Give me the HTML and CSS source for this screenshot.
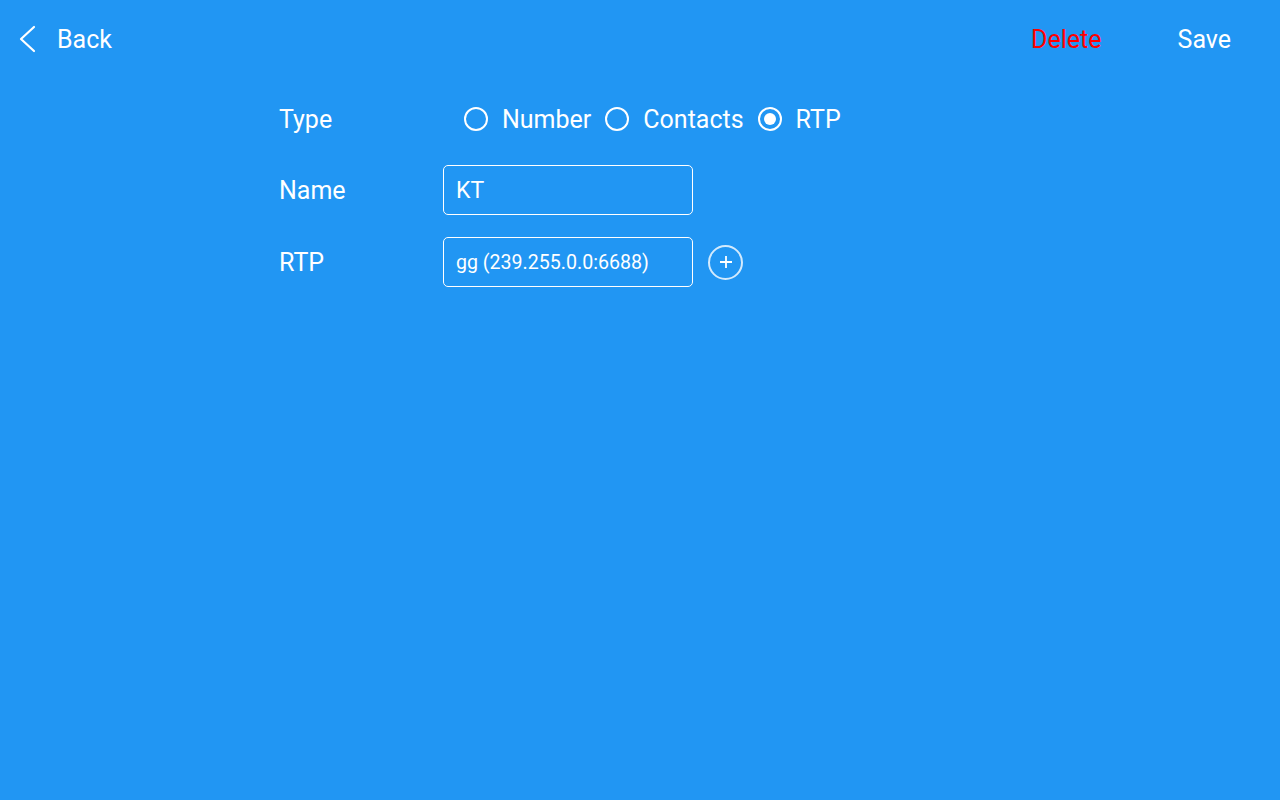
FILE: index.html
```html
<!DOCTYPE html>
<html>
<head>
<meta charset="utf-8">
<link rel="stylesheet" href="styles.css">
</head>
<body>
<div class="page">
  <header class="topbar">
    <div class="back">
      <svg class="chev" width="18" height="28" viewBox="0 0 18 28"><path d="M15 2 L2 14 L15 26" fill="none" stroke="#fff" stroke-width="2.2" stroke-linecap="round" stroke-linejoin="round"/></svg>
      <span>Back</span>
    </div>
    <div class="actions">
      <span class="delete">Delete</span>
      <span class="save">Save</span>
    </div>
  </header>
  <main class="form">
    <div class="row type-row">
      <div class="label">Type</div>
      <div class="radios">
        <div class="radio"><span class="circle"></span><span>Number</span></div>
        <div class="radio"><span class="circle"></span><span>Contacts</span></div>
        <div class="radio"><span class="circle checked"></span><span>RTP</span></div>
      </div>
    </div>
    <div class="row">
      <div class="label">Name</div>
      <div class="input name">KT</div>
    </div>
    <div class="row">
      <div class="label">RTP</div>
      <div class="input rtp">gg (239.255.0.0:6688)</div>
      <div class="add">
        <svg width="14" height="14" viewBox="0 0 14 14"><path d="M7 1 V13 M1 7 H13" stroke="#fff" stroke-width="1.8"/></svg>
      </div>
    </div>
  </main>
</div>
</body>
</html>
```
FILE: styles.css
```css
html, body {
  margin: 0;
  padding: 0;
  background: #2196F3;
}
body {
  font-family: Roboto, "Noto Sans", sans-serif;
  color: #fff;
  width: 1280px;
  height: 800px;
  overflow: hidden;
}
.topbar {
  height: 78px;
  display: flex;
  align-items: center;
  justify-content: space-between;
  padding: 0 49px 0 19px;
}
.back {
  display: flex;
  align-items: center;
  gap: 20px;
  font-size: 25px;
}
.chev {
  display: block;
}
.actions {
  display: flex;
  align-items: center;
  gap: 76px;
  font-size: 25px;
}
.delete {
  color: #ff0000;
}
.form {
  padding: 15px 0 0 279px;
  display: flex;
  flex-direction: column;
  gap: 22px;
}
.row {
  display: flex;
  align-items: center;
  height: 50px;
}
.type-row {
  padding-top: 1px;
  margin-bottom: -1px;
}
.label {
  width: 164px;
  font-size: 25px;
}
.radios {
  display: flex;
  align-items: center;
  gap: 14px;
  margin-left: 21px;
  font-size: 25px;
}
.radio {
  display: flex;
  align-items: center;
  gap: 14px;
}
.circle {
  width: 20px;
  height: 20px;
  border: 2px solid #fff;
  border-radius: 50%;
  display: flex;
  align-items: center;
  justify-content: center;
}
.circle.checked::after {
  content: "";
  width: 12px;
  height: 12px;
  border-radius: 50%;
  background: #fff;
}
.input {
  box-sizing: border-box;
  width: 250px;
  height: 50px;
  border: 1px solid #fff;
  border-radius: 5px;
  padding: 0 12px;
  display: flex;
  align-items: center;
}
.input.name {
  font-size: 23px;
}
.input.rtp {
  font-size: 19.6px;
}
.add {
  margin-left: 15px;
  width: 31px;
  height: 31px;
  border: 2px solid rgba(255,255,255,0.8);
  border-radius: 50%;
  display: flex;
  align-items: center;
  justify-content: center;
}
.add svg {
  display: block;
}
```
